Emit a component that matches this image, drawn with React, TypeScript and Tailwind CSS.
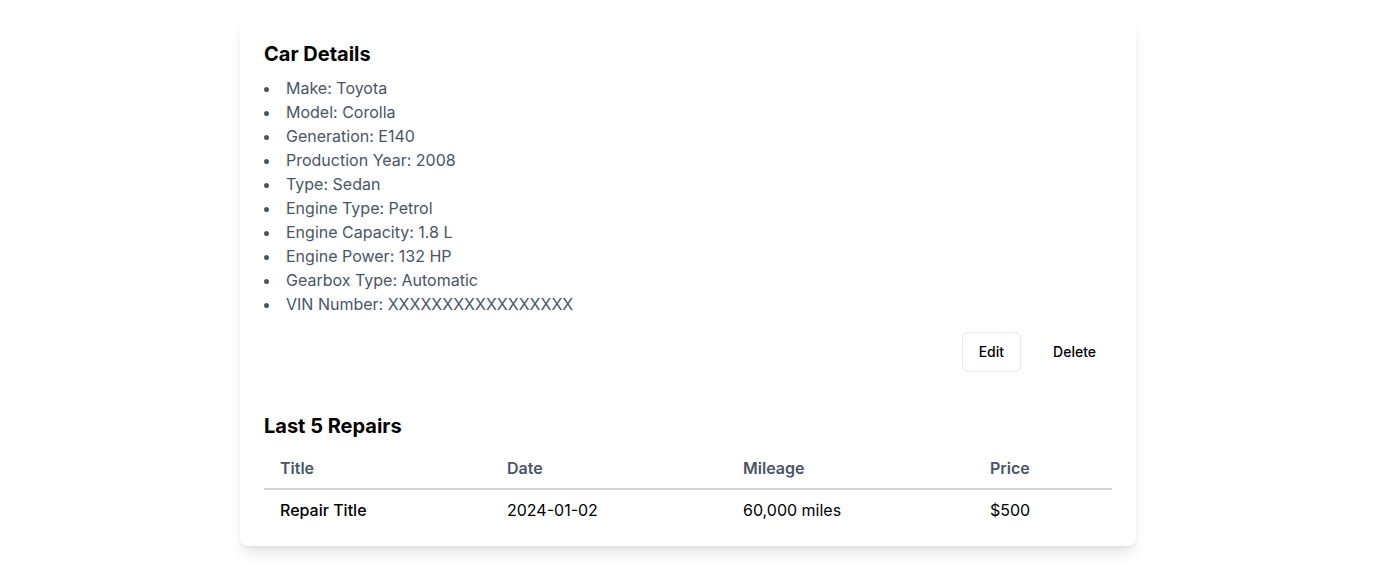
const details = [
  'Make: Toyota',
  'Model: Corolla',
  'Generation: E140',
  'Production Year: 2008',
  'Type: Sedan',
  'Engine Type: Petrol',
  'Engine Capacity: 1.8 L',
  'Engine Power: 132 HP',
  'Gearbox Type: Automatic',
  'VIN Number: XXXXXXXXXXXXXXXXX',
];

const repairs = [{ title: 'Repair Title', date: '2024-01-02', mileage: '60,000 miles', price: '$500' }];

export default function App() {
  return (
    <div className="min-h-screen bg-white pt-4 font-['Inter',sans-serif]">
      <div className="mx-auto max-w-4xl rounded-lg bg-white px-6 pt-6 pb-4 shadow-lg">
        <h2 className="mb-2 text-xl font-bold text-black">Car Details</h2>
        <ul className="list-inside list-disc text-gray-600">
          {details.map((d) => (
            <li key={d}>{d}</li>
          ))}
        </ul>

        <div className="mt-4 flex justify-end gap-4">
          <button className="h-10 rounded-md border border-gray-200 px-4 text-sm font-medium text-black">Edit</button>
          <button className="h-10 rounded-md px-4 text-sm font-medium text-black">Delete</button>
        </div>

        <h2 className="mt-10 mb-2 text-xl font-bold text-black">Last 5 Repairs</h2>
        <table className="w-full border-collapse text-left">
          <thead>
            <tr className="border-b-2 border-gray-300">
              <th className="w-[227px] px-4 py-2 font-semibold text-gray-600">Title</th>
              <th className="w-[236px] px-4 py-2 font-semibold text-gray-600">Date</th>
              <th className="w-[247px] px-4 py-2 font-semibold text-gray-600">Mileage</th>
              <th className="px-4 py-2 font-semibold text-gray-600">Price</th>
            </tr>
          </thead>
          <tbody>
            {repairs.map((r) => (
              <tr key={r.title}>
                <td className="px-4 py-2 font-medium text-black">{r.title}</td>
                <td className="px-4 py-2 text-black">{r.date}</td>
                <td className="px-4 py-2 text-black">{r.mileage}</td>
                <td className="px-4 py-2 text-black">{r.price}</td>
              </tr>
            ))}
          </tbody>
        </table>
      </div>
    </div>
  );
}
